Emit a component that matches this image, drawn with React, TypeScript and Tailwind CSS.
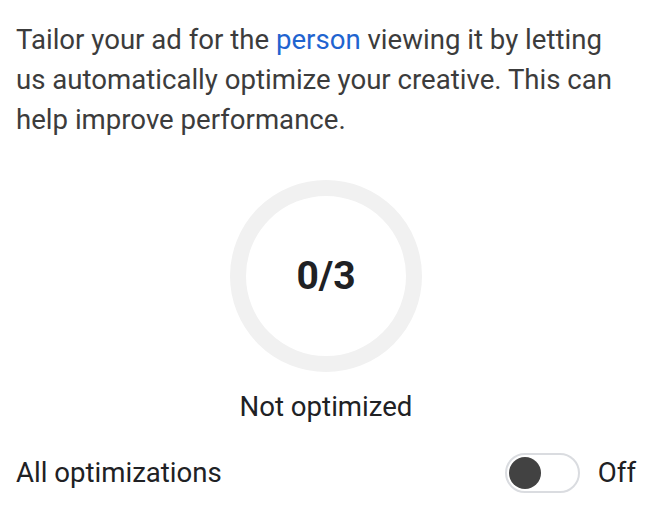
import React from 'react';

const App: React.FC = () => {
  return (
    <div className="w-[652px] h-[514px] bg-white overflow-hidden" style={{ fontFamily: 'Roboto, "Noto Sans", sans-serif' }}>
      <div className="px-4 pt-5">
        <p className="text-[27.6px] leading-[40px] text-[#3c3c3c]">
          Tailor your ad for the <span className="text-[#1f64d0]">person</span> viewing it by letting us automatically optimize your creative. This can help improve performance.
        </p>

        {/* Progress ring */}
        <div className="flex flex-col items-center mt-10">
          <div className="w-[192px] h-[192px] rounded-full border-[16px] border-[#f1f1f1] flex items-center justify-center">
            <span className="text-[39px] font-bold text-[#202124] leading-none">0/3</span>
          </div>
          <div className="mt-[15px] text-[27.6px] leading-[40px] text-[#202124]">Not optimized</div>
        </div>

        {/* Toggle row */}
        <div className="flex items-center justify-between mt-[26px] h-[40px]">
          <span className="text-[27.6px] leading-[40px] text-[#202124]">All optimizations</span>
          <div className="flex items-center gap-[18px]">
            <button className="w-[75px] h-[40px] rounded-full border-2 border-[#dadce0] bg-white flex items-center px-[2px]">
              <span className="w-[32px] h-[32px] rounded-full bg-[#424242] block" />
            </button>
            <span className="text-[27.6px] leading-[40px] text-[#202124]">Off</span>
          </div>
        </div>
      </div>
    </div>
  );
};

export default App;
